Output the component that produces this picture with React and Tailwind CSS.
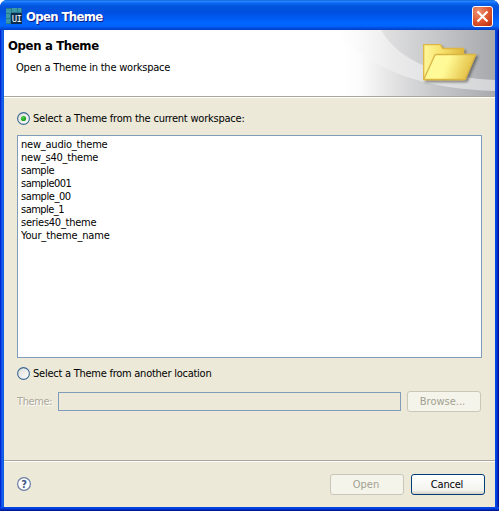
import React from 'react';

const themes = [
  ['new_audio_theme', 'tracking-[-0.22px]'],
  ['new_s40_theme', 'tracking-[-0.22px]'],
  ['sample', 'tracking-[-0.5px]'],
  ['sample001', 'tracking-[-0.5px]'],
  ['sample_00', 'tracking-[-0.42px]'],
  ['sample_1', 'tracking-[-0.52px]'],
  ['series40_theme', 'tracking-[-0.25px]'],
  ['Your_theme_name', 'tracking-[-0.15px]'],
];

function AppIcon() {
  return (
    <svg width="16" height="16" viewBox="0 0 16 16" className="shrink-0">
      <rect width="16" height="16" rx="1" fill="#247a8c" />
      <path d="M0 1h5v4H0zM6 0h5v4H6zM12 0h3v4h-3zM0 6h4v4H0zM0 11h4v4H0z" fill="#3c98a8" />
      <rect x="5" y="5" width="11" height="11" fill="#0a2c50" />
      <text x="5.8" y="14" fontSize="9" fontFamily="'DejaVu Sans Mono',monospace" fill="#fff" textLength="10">UI</text>
    </svg>
  );
}

function CloseButton() {
  return (
    <svg width="21" height="21" viewBox="0 0 21 21" className="shrink-0">
      <defs>
        <radialGradient id="close" cx=".3" cy=".25" r=".95">
          <stop offset="0" stopColor="#ed9272" />
          <stop offset=".5" stopColor="#e25a34" />
          <stop offset="1" stopColor="#b92e0c" />
        </radialGradient>
      </defs>
      <rect x=".5" y=".5" width="20" height="20" rx="2.5" fill="url(#close)" stroke="#fff" />
      <path d="M5.5 5.5l10 10M15.5 5.5l-10 10" stroke="#fff" strokeWidth="2.1" />
    </svg>
  );
}

function Banner() {
  return (
    <svg width="155" height="66" viewBox="0 0 155 66" className="block shrink-0">
      <defs>
        <linearGradient id="base" gradientUnits="userSpaceOnUse" x1="41" x2="155" y1="0" y2="0">
          <stop offset="0" stopColor="#e2e2e3" />
          <stop offset=".5" stopColor="#c5c6c8" />
          <stop offset="1" stopColor="#a7a8ab" />
        </linearGradient>
        <linearGradient id="low" gradientUnits="userSpaceOnUse" x1="0" x2="155" y1="0" y2="0">
          <stop offset="0" stopColor="#fff" />
          <stop offset=".13" stopColor="#fcfcfc" />
          <stop offset=".35" stopColor="#e2e2e3" />
          <stop offset=".6" stopColor="#c8c9cb" />
          <stop offset="1" stopColor="#a9aaad" />
        </linearGradient>
        <linearGradient id="swoosh" gradientUnits="userSpaceOnUse" x1="0" x2="155" y1="0" y2="0">
          <stop offset="0" stopColor="#fff" />
          <stop offset=".12" stopColor="#fafafa" />
          <stop offset=".35" stopColor="#ebebec" />
          <stop offset="1" stopColor="#d3d4d6" />
        </linearGradient>
        <linearGradient id="back" x1="0" x2="1">
          <stop offset="0" stopColor="#fff79a" />
          <stop offset=".5" stopColor="#f5df68" />
          <stop offset="1" stopColor="#dbb63c" />
        </linearGradient>
        <linearGradient id="front" x1="0" x2="1" y2=".2">
          <stop offset="0" stopColor="#fffb9d" />
          <stop offset=".5" stopColor="#fff995" />
          <stop offset="1" stopColor="#e3bf45" />
        </linearGradient>
        <filter id="shadow" x="-20%" y="-20%" width="150%" height="150%">
          <feDropShadow dx="2" dy="2" stdDeviation="1.3" floodColor="#333" floodOpacity=".5" />
        </filter>
      </defs>
      <rect width="155" height="66" fill="url(#low)" />
      <path d="M41 0H155V50C107 48 60 34 41 0Z" fill="url(#base)" />
      <path d="M0 0H41C60 34 107 48 155 50V61C90 59 38 44 0 6Z" fill="url(#swoosh)" />
      <g filter="url(#shadow)" strokeLinejoin="round">
        <path d="M83.7 49.5V14.7H100.5L102.5 18.5H123.5V49.5Z" fill="url(#back)" stroke="#e0b640" strokeWidth="1.3" />
        <path d="M83.7 49.5L94.8 25.2Q95.2 24.5 96.2 24.5H135.7L125.2 49.5Z" fill="url(#front)" stroke="#d9b542" strokeWidth="1.3" />
      </g>
    </svg>
  );
}

function Radio({ checked }) {
  return (
    <svg width="13" height="13" viewBox="0 0 13 13" className="shrink-0">
      <defs>
        <linearGradient id="radio" x1="0" y1="0" x2="1" y2="1">
          <stop offset="0" stopColor="#dcdcd7" />
          <stop offset="1" stopColor="#fff" />
        </linearGradient>
        <radialGradient id="dot" cx=".35" cy=".35">
          <stop offset="0" stopColor="#55d551" />
          <stop offset="1" stopColor="#21a121" />
        </radialGradient>
      </defs>
      <circle cx="6.5" cy="6.5" r="5.9" fill="url(#radio)" stroke="#3a6894" strokeWidth="1.1" />
      {checked && <circle cx="6.5" cy="6.5" r="2.6" fill="url(#dot)" />}
    </svg>
  );
}

function HelpIcon() {
  return (
    <svg width="14" height="14" viewBox="0 0 14 14" className="-mt-[1px]">
      <circle cx="7" cy="7" r="6.4" fill="#fff" stroke="#6b7da3" strokeWidth="1.2" />
      <text x="7" y="11" textAnchor="middle" fontSize="11" fontWeight="bold" fontFamily="'DejaVu Sans Condensed','DejaVu Sans',sans-serif" fill="#405384">?</text>
    </svg>
  );
}

export default function App() {
  return (
    <div className="flex h-[511px] w-[499px] flex-col bg-white font-['DejaVu_Sans_Condensed','DejaVu_Sans',sans-serif] text-[11px] leading-[13px] text-black">
      <div className="flex h-[511px] flex-col overflow-hidden rounded-t-[7px] bg-[linear-gradient(90deg,#0019cf_0px,#0831d9_1px,#166aee_2px,#0855dd_4px,#0048e8_495px,#003ddc_497px,#001da0_498px,#00138c_499px)]">
        <div className="flex h-[30px] shrink-0 items-start bg-[linear-gradient(180deg,#0058d0_0px,#308bff_1px,#0a6af5_3px,#0355dd_6px,#0050df_12px,#0058ef_17px,#0066ff_23px,#0064fc_26px,#0050e0_28px,#003dbf_30px)] pt-[6px] pr-[6px] pl-[6px]">
          <div className="mt-[2px]"><AppIcon /></div>
          <span className="mt-[3px] ml-[4px] grow text-[13px] leading-[16px] font-bold tracking-[-0.65px] whitespace-nowrap text-white [text-shadow:1px_1px_0_#0a1883]">Open Theme</span>
          <CloseButton />
        </div>
        <div className="mx-[4px] flex h-[477px] shrink-0 flex-col bg-[#ece9d8]">
          <div className="flex h-[66px] shrink-0 bg-white">
            <div className="grow whitespace-nowrap">
              <h1 className="mt-[9px] ml-[4px] text-[13px] leading-[14px] font-bold tracking-[-0.35px]">Open a Theme</h1>
              <p className="mt-[8px] ml-[12px] tracking-[-0.22px]">Open a Theme in the workspace</p>
            </div>
            <Banner />
          </div>
          <div className="h-[2px] shrink-0 border-t border-b border-t-[#aca899] border-b-white" />
          <div className="flex h-[362px] shrink-0 flex-col pt-[14px] pr-[13px] pl-[13px]">
            <div className="flex h-[13px] items-center gap-[3px] whitespace-nowrap">
              <Radio checked />
              <span className="tracking-[-0.22px]">Select a Theme from the current workspace:</span>
            </div>
            <ul className="mt-[10px] h-[223px] w-[465px] border border-[#7f9db9] bg-white pt-[2px] pl-[3px]">
              {themes.map(([name, tracking]) => (
                <li key={name} className={tracking}>{name}</li>
              ))}
            </ul>
            <div className="mt-[9px] flex h-[13px] items-center gap-[3px] whitespace-nowrap">
              <Radio />
              <span className="tracking-[-0.25px]">Select a Theme from another location</span>
            </div>
            <div className="mt-[11px] flex h-[21px] items-center text-[#aca899]">
              <span className="w-[41px] tracking-[-0.4px] [text-shadow:1px_1px_0_#fff]">Theme:</span>
              <div className="h-[19px] w-[343px] border border-[#7f9db9]" />
              <button className="ml-[6px] h-[21px] w-[74px] rounded-[3px] border border-[#c9c7ba] bg-[#f5f4ea] pr-[3px] text-[#a1a192]">Browse...</button>
            </div>
          </div>
          <div className="h-[2px] shrink-0 border-t border-b border-t-[#aca899] border-b-white" />
          <div className="flex h-[45px] items-center pr-[10px] pl-[13px]">
            <HelpIcon />
            <div className="grow" />
            <button className="h-[21px] w-[74px] rounded-[3px] border border-[#c9c7ba] bg-[#f5f4ea] pr-[2px] text-[#a1a192]">Open</button>
            <button className="ml-[7px] h-[21px] w-[74px] rounded-[3px] border border-[#003c74] bg-[linear-gradient(180deg,#fff,#f3f3ef_80%,#d6d0c5)] pr-[2px] tracking-[-0.2px]">Cancel</button>
          </div>
        </div>
        <div className="h-[4px] shrink-0 bg-[linear-gradient(180deg,#0048e8_0px,#003ddc_2px,#001da0_3px,#00138c_4px)]" />
      </div>
    </div>
  );
}
